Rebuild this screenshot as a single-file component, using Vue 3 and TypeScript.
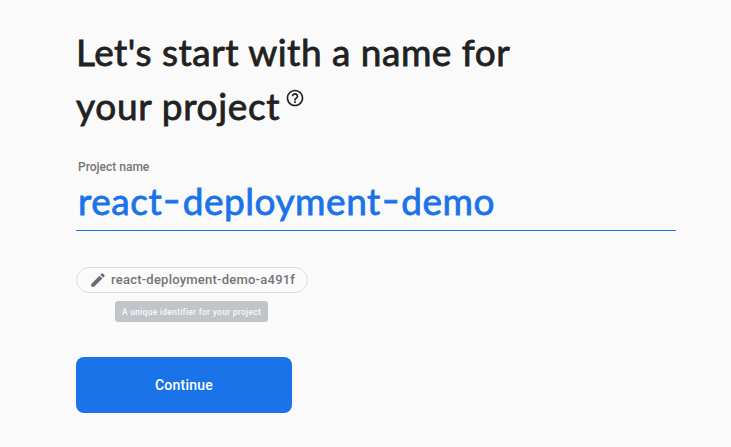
<script setup lang="ts">
import { computed, ref } from 'vue'

const projectName = ref<string>('react-deployment-demo')
const projectId = ref<string>('react-deployment-demo-a491f')
const nameParts = computed<string[]>(() => projectName.value.split(/(-)/))
</script>

<template>
  <main class="page">
    <h1 class="title">
      <span class="line first">Let's start with a name for</span>
      <span class="line second"><span>your project</span>
        <svg class="help" viewBox="0 0 24 24" aria-hidden="true">
          <path d="M11 18h2v-2h-2v2zm1-16C6.48 2 2 6.48 2 12s4.48 10 10 10 10-4.48 10-10S17.52 2 12 2zm0 18c-4.41 0-8-3.59-8-8s3.59-8 8-8 8 3.59 8 8-3.59 8-8 8zm0-14c-2.21 0-4 1.79-4 4h2c0-1.1.9-2 2-2s2 .9 2 2c0 2-3 1.75-3 5h2c0-2.25 3-2.5 3-5 0-2.21-1.79-4-4-4z" />
        </svg>
      </span>
    </h1>
    <div class="label">Project name</div>
    <div class="field"><span v-for="(part, i) in nameParts" :key="i" :class="{ hyphen: part === '-' }">{{ part }}</span></div>
    <div class="identifier">
      <div class="chip">
        <svg class="pencil" viewBox="0 0 24 24" aria-hidden="true">
          <path d="M3 17.25V21h3.75L17.81 9.94l-3.75-3.75L3 17.25zM20.71 7.04a1 1 0 0 0 0-1.41l-2.34-2.34a1 1 0 0 0-1.41 0l-1.83 1.83 3.75 3.75 1.83-1.83z" />
        </svg>
        <span>{{ projectId }}</span>
      </div>
      <div class="tip">A unique identifier for your project</div>
    </div>
    <button class="continue" type="button">Continue</button>
  </main>
</template>

<style>
body {
  background: #fafafa;
}
</style>

<style scoped>
.page {
  box-sizing: border-box;
  height: 447px;
  padding: 25px 55px 0 76px;
  display: flex;
  flex-direction: column;
  align-items: flex-start;
  overflow: hidden;
  background: #fafafa;
  font-family: Roboto, sans-serif;
}
.title {
  margin: 0;
  color: #212121;
  font: 400 37px/54px Lato, sans-serif;
  -webkit-text-stroke: 0.8px currentColor;
}
.line {
  display: flex;
  white-space: nowrap;
}
.first {
  letter-spacing: 0.5px;
}
.second {
  letter-spacing: 0.68px;
}
.help {
  width: 20px;
  height: 20px;
  margin: 9px 0 0 5px;
  fill: #212121;
  stroke: none;
}
.label {
  margin: 26px 0 0 2px;
  color: #757575;
  font-size: 12px;
  font-weight: 500;
  line-height: 16px;
}
.field {
  box-sizing: border-box;
  width: 600px;
  height: 56px;
  padding-left: 2px;
  border-bottom: 1px solid #1a73e8;
  color: #1a73e8;
  font: 400 37px/52px Lato, sans-serif;
  letter-spacing: 0.55px;
  -webkit-text-stroke: 0.8px currentColor;
  white-space: nowrap;
}
.hyphen {
  display: inline-block;
  margin: 0 3px;
  transform: translateY(-2px) scaleX(1.3);
}
.identifier {
  margin-top: 36px;
  display: flex;
  flex-direction: column;
  align-items: flex-start;
}
.chip {
  box-sizing: border-box;
  width: 232px;
  height: 26px;
  padding: 0 0 1px 12px;
  display: flex;
  align-items: center;
  gap: 4px;
  border: 1px solid #dadce0;
  border-radius: 13px;
  color: #757575;
  font-size: 13px;
  font-weight: 500;
  letter-spacing: 0.23px;
  white-space: nowrap;
}
.pencil {
  width: 18px;
  height: 18px;
  margin-top: 1px;
  fill: #6b6b6b;
}
.tip {
  box-sizing: border-box;
  width: 153px;
  height: 21px;
  margin: 8px 0 0 39px;
  border-radius: 3px;
  background: #c1c4c9;
  color: #f8f8f9;
  font-size: 8.5px;
  font-weight: 500;
  letter-spacing: 0.26px;
  line-height: 22px;
  text-align: center;
  white-space: nowrap;
}
.continue {
  width: 216px;
  height: 56px;
  margin-top: 35px;
  padding: 0;
  border: 0;
  border-radius: 8px;
  background: #1a73e8;
  color: #fff;
  font: 500 14px/56px Roboto, sans-serif;
  letter-spacing: 0.25px;
}
</style>
